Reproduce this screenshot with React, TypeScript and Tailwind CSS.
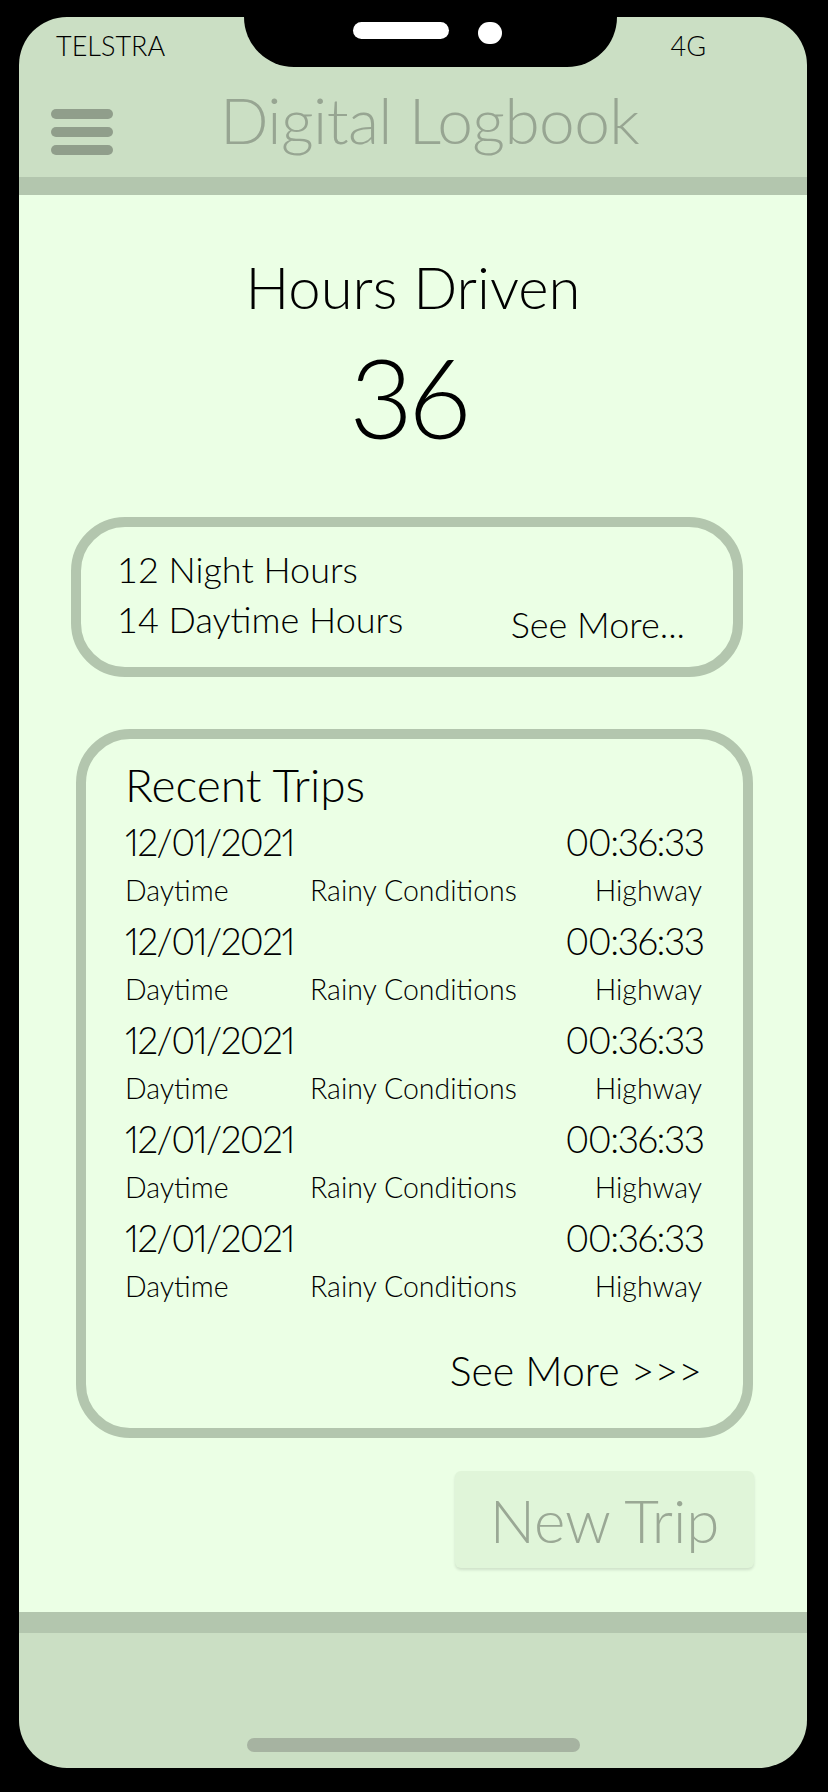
import React from "react";

const trips = [
    { date: "12/01/2021", time: "00:36:33", period: "Daytime", weather: "Rainy Conditions", road: "Highway" },
    { date: "12/01/2021", time: "00:36:33", period: "Daytime", weather: "Rainy Conditions", road: "Highway" },
    { date: "12/01/2021", time: "00:36:33", period: "Daytime", weather: "Rainy Conditions", road: "Highway" },
    { date: "12/01/2021", time: "00:36:33", period: "Daytime", weather: "Rainy Conditions", road: "Highway" },
    { date: "12/01/2021", time: "00:36:33", period: "Daytime", weather: "Rainy Conditions", road: "Highway" },
];

function TripRow({ trip }: { trip: (typeof trips)[number] }) {
    return (
        <div className="flex flex-col">
            <div className="flex justify-between text-[37px] leading-[38px] tracking-[-1.5px] proportional-nums">
                <span>{trip.date}</span>
                <span className="mr-[-1.5px]">{trip.time}</span>
            </div>
            <div className="mt-[16px] grid grid-cols-[185px_1fr_auto] text-[28.5px] leading-[27px]">
                <span>{trip.period}</span>
                <span>{trip.weather}</span>
                <span>{trip.road}</span>
            </div>
        </div>
    );
}

export default function App() {
    return (
        <div className="relative w-[828px] h-[1792px] bg-black pt-[17px] pl-[19px] font-['Lato','Open_Sans',sans-serif] font-light text-black">
            {/* notch */}
            <div className="absolute left-[244px] top-0 w-[373px] h-[67px] bg-black rounded-b-[50px] z-10">
                <div className="absolute left-[109px] top-[22px] w-[96px] h-[17px] rounded-full bg-white" />
                <div className="absolute left-[234px] top-[22px] w-[24px] h-[22px] rounded-full bg-white" />
            </div>

            <div className="w-[788px] h-[1751px] rounded-[48px] overflow-hidden flex flex-col">
                {/* header */}
                <header className="h-[160px] bg-[#cbdfc4] flex flex-col">
                    <div className="flex justify-between pl-[37px] pr-[101px] pt-[15px] text-[27px] leading-none">
                        <span>TELSTRA</span>
                        <span>4G</span>
                    </div>
                    <div className="flex items-start mt-[22px] pl-[32px]">
                        <div className="mt-[28px] flex flex-col gap-[8px] w-[62px]">
                            <span className="h-[10px] rounded-full bg-[#909e8b]" />
                            <span className="h-[10px] rounded-full bg-[#909e8b]" />
                            <span className="h-[10px] rounded-full bg-[#909e8b]" />
                        </div>
                        <h1 className="mt-[7px] ml-[107px] text-[64px] leading-none tracking-[-0.6px] text-[#97a592]">
                            Digital Logbook
                        </h1>
                    </div>
                </header>
                <div className="h-[18px] bg-[#b3c6ae]" />

                {/* content */}
                <main className="h-[1417px] bg-[#ebffe5] flex flex-col">
                    <h2 className="mt-[63px] text-center text-[58px] leading-none">Hours Driven</h2>
                    <p className="mt-[25px] pr-[10px] text-center text-[110px] leading-none tracking-[-5px]">36</p>

                    <div className="mt-[66px] ml-[52px] w-[672px] h-[160px] rounded-[54px] border-[10px] border-[#b3c6ae] pl-[36px] pr-[48px] pt-[17px] text-[36px] leading-[50px]">
                        <div>12 Night Hours</div>
                        <div className="flex justify-between">
                            <span>14 Daytime Hours</span>
                            <span className="translate-y-[5px]">See More...</span>
                        </div>
                    </div>

                    <div className="mt-[52px] ml-[57px] w-[677px] h-[709px] rounded-[54px] border-[10px] border-[#b3c6ae] pl-[39px] pr-[41px] pt-[23px] flex flex-col">
                        <h3 className="text-[46px] leading-none">Recent Trips</h3>
                        <div className="mt-[15px] flex flex-col gap-[18px]">
                            {trips.map((t, i) => (
                                <TripRow key={i} trip={t} />
                            ))}
                        </div>
                        <div className="mt-[50px] text-right text-[41px] leading-none">See More &gt;&gt;&gt;</div>
                    </div>

                    <button className="self-end mr-[53px] mt-[33px] w-[299px] h-[97px] rounded-[6px] bg-[#e0f5d9] shadow-[0_2px_3px_rgba(0,0,0,0.12)] text-[60px] leading-none text-[#9aa895]">
                        New Trip
                    </button>
                </main>

                <div className="h-[21px] bg-[#b3c6ae]" />
                <footer className="flex-1 bg-[#cbdfc4] flex items-end justify-center pb-[16px]">
                    <div className="w-[333px] h-[14px] rounded-full bg-[#a6b3a1]" />
                </footer>
            </div>
        </div>
    );
}
